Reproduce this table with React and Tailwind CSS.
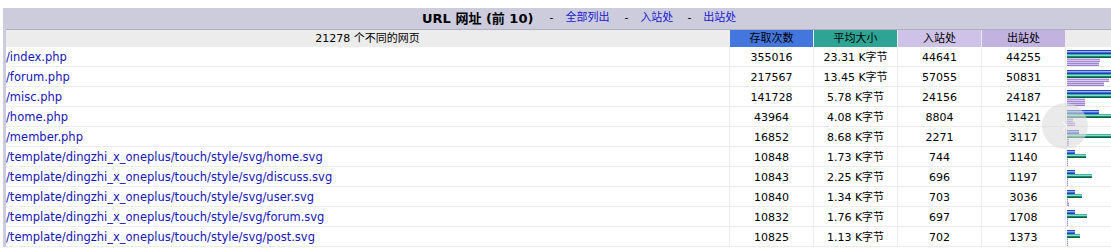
import { ChevronRight } from 'lucide-react';

const rows = [
  { url: '/index.php', hits: 355016, size: '23.31', entry: 44641, exit: 44255 },
  { url: '/forum.php', hits: 217567, size: '13.45', entry: 57055, exit: 50831 },
  { url: '/misc.php', hits: 141728, size: '5.78', entry: 24156, exit: 24187 },
  { url: '/home.php', hits: 43964, size: '4.08', entry: 8804, exit: 11421 },
  { url: '/member.php', hits: 16852, size: '8.68', entry: 2271, exit: 3117 },
  { url: '/template/dingzhi_x_oneplus/touch/style/svg/home.svg', hits: 10848, size: '1.73', entry: 744, exit: 1140 },
  { url: '/template/dingzhi_x_oneplus/touch/style/svg/discuss.svg', hits: 10843, size: '2.25', entry: 696, exit: 1197 },
  { url: '/template/dingzhi_x_oneplus/touch/style/svg/user.svg', hits: 10840, size: '1.34', entry: 703, exit: 3036 },
  { url: '/template/dingzhi_x_oneplus/touch/style/svg/forum.svg', hits: 10832, size: '1.76', entry: 697, exit: 1708 },
  { url: '/template/dingzhi_x_oneplus/touch/style/svg/post.svg', hits: 10825, size: '1.13', entry: 702, exit: 1373 },
];

const BAR = 260;
const maxHits = 355016;
const maxSize = 23.31;

// bar images as striped 4px strips
function Bar({ width, kind }) {
  const cls = {
    p: 'bg-[linear-gradient(to_bottom,#2b48c0_25%,#8fb0ff_25%_50%,#4477dd_50%_75%,#1f3aa8_75%)]',
    k: 'bg-[linear-gradient(to_bottom,#3db8a5_25%,#8ad8c8_25%_50%,#1f8a70_50%_75%,#0f5e45_75%)]',
    e: 'bg-[linear-gradient(to_bottom,#ddd2f2_25%,#a78fd6_25%_50%,#d8ccef_50%_75%,#a48ad4_75%)]',
    x: 'bg-[linear-gradient(to_bottom,#d2c5ec_25%,#9d84cf_25%_50%,#cdbfe8_50%_75%,#9a80cc_75%)]',
  }[kind];
  return <div className={`h-[4px] ${cls}`} style={{ width: Math.max(1, Math.round(width)) }} />;
}

export default function App() {
  return (
    <div
      className="relative w-[1111px] h-[251px] overflow-hidden bg-white pt-[8px] pl-[3px] text-black"
      style={{ fontFamily: '"DejaVu Sans", "Noto Sans CJK SC", sans-serif' }}
    >
      <div className="w-[1155px] bg-[#ccccdd] pl-[3px]">
        {/* Title */}
        <div className="h-[21px] flex items-center text-[11px] pl-[416px]">
          <span className="text-[13px] font-bold">URL 网址 (前 10)</span>
          <span className="ml-[16px]">-</span>
          <a className="ml-[12px] text-[#1a1ad0]">全部列出</a>
          <span className="ml-[15px]">-</span>
          <a className="ml-[12px] text-[#1a1ad0]">入站处</a>
          <span className="ml-[14px]">-</span>
          <a className="ml-[12px] text-[#1a1ad0]">出站处</a>
        </div>

        <div className="bg-white border-t border-[#b0b0c0]">
          {/* Header */}
          <div className="flex h-[17px] text-[11px] leading-[18px] bg-[#ececec]">
            <div className="w-[723px] text-center">21278 个不同的网页</div>
            <div className="w-[84px] border-l border-[#ececec] bg-[#4477dd] text-center">存取次数</div>
            <div className="w-[84px] border-l border-[#ececec] bg-[#2ea495] text-center">平均大小</div>
            <div className="w-[84px] border-l border-[#ececec] bg-[#cec2e8] text-center">入站处</div>
            <div className="w-[84px] border-l border-[#ececec] bg-[#c1b2e0] text-center">出站处</div>
            <div className="flex-1 border-l border-[#ececec]" />
          </div>

          {rows.map((r) => (
            <div key={r.url} className="flex h-[20px] border-b border-[#ececec] text-[11px] leading-[21px]">
              <div className="w-[723px] text-[11.5px] text-[#1414b4] whitespace-nowrap">{r.url}</div>
              <div className="w-[84px] border-l border-[#ececec] text-center">{r.hits}</div>
              <div className="w-[84px] border-l border-[#ececec] text-center">{r.size} K字节</div>
              <div className="w-[84px] border-l border-[#ececec] text-center">{r.entry}</div>
              <div className="w-[84px] border-l border-[#ececec] text-center">{r.exit}</div>
              <div className="flex-1 border-l border-[#ececec] pl-[1px] pt-[3px] overflow-hidden">
                <Bar kind="p" width={(BAR * r.hits) / maxHits} />
                <Bar kind="k" width={(BAR * parseFloat(r.size)) / maxSize} />
                <Bar kind="e" width={(BAR * r.entry) / maxHits} />
                <Bar kind="x" width={(BAR * r.exit) / maxHits} />
              </div>
            </div>
          ))}
        </div>
      </div>

      {/* floating scroll button overlay */}
      <div className="absolute left-[1042px] top-[103px] w-[46px] h-[46px] rounded-full bg-[#dcdcdc]/60 flex items-center justify-center">
        <ChevronRight className="w-[16px] h-[16px] text-white" strokeWidth={1.5} />
      </div>
    </div>
  );
}
